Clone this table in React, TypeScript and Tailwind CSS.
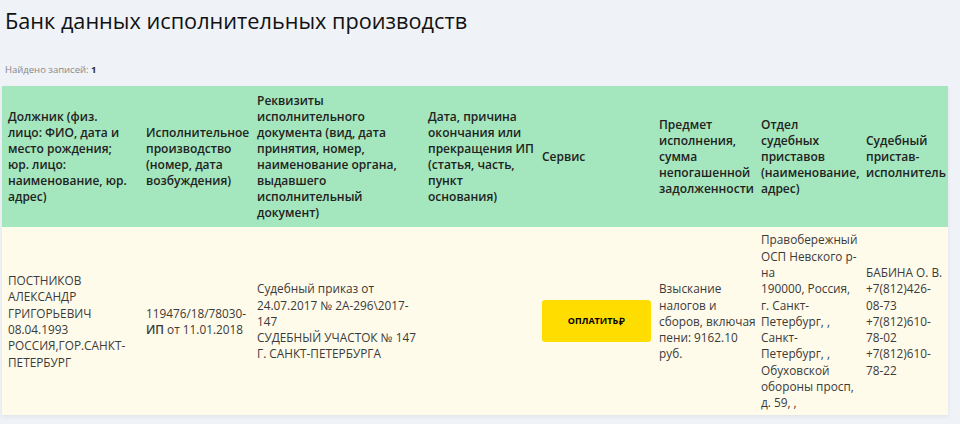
import React from "react";

const heads = [
  "Должник (физ. лицо: ФИО, дата и место рождения; юр. лицо: наименование, юр. адрес)",
  "Исполнительное производство (номер, дата возбуждения)",
  "Реквизиты исполнительного документа (вид, дата принятия, номер, наименование органа, выдавшего исполнительный документ)",
  "Дата, причина окончания или прекращения ИП (статья, часть, пункт основания)",
  "Сервис",
  "Предмет исполнения, сумма непогашенной задолженности",
  "Отдел судебных приставов (наименование, адрес)",
  "Судебный пристав-исполнитель",
];

const widths = ["w-[138px]", "w-[111px]", "w-[171px]", "w-[114px]", "w-[117px]", "w-[102px]", "w-[105px]", "w-[110px]"];

export default function App() {
  return (
    <div className="h-[424px] w-[960px] overflow-hidden bg-[#eff2f7] font-['Open_Sans',sans-serif]">
      <h1 className="pl-[5px] pt-[5px] text-[21.7px] leading-[32px] text-[#111]">
        Банк данных исполнительных производств
      </h1>
      <p className="mt-[26px] pl-[5px] text-[9.5px] leading-[14px] text-[#888]">
        Найдено записей: <b className="text-[#333]">1</b>
      </p>
      <div className="ml-[2px] mt-[9px] w-[946px] overflow-hidden shadow-[0_2px_4px_rgba(0,0,0,0.06)]">
        <table className="w-[968px] table-fixed border-collapse">
          <thead>
            <tr className="h-[141px] bg-[#a4e6bd]">
              {heads.map((h, i) => (
                <th
                  key={i}
                  className={`${widths[i]} pl-[6px] ${i === 0 ? "pr-[10px]" : "pr-[2px]"} text-left align-middle text-[12px] font-semibold leading-[16px] text-[#222]`}
                >
                  {h}
                </th>
              ))}
            </tr>
          </thead>
          <tbody>
            <tr className="h-[188px] bg-[#fffbea] text-[11.8px] leading-[16.3px] text-[#3a3a3a]">
              <td className="pl-[6px] pr-[2px] align-middle">
                ПОСТНИКОВ АЛЕКСАНДР ГРИГОРЬЕВИЧ
                <br />
                08.04.1993
                <br />
                РОССИЯ,ГОР.САНКТ-ПЕТЕРБУРГ
              </td>
              <td className="pl-[6px] pr-[2px] align-middle">
                119476/18/78030-<span className="font-semibold">ИП</span> от 11.01.2018
              </td>
              <td className="pl-[6px] pr-[1px] align-middle">
                Судебный приказ от 24.07.2017 № 2А-296\2017-147
                <br />
                СУДЕБНЫЙ УЧАСТОК № 147 Г. САНКТ-ПЕТЕРБУРГА
              </td>
              <td className="pl-[6px] pr-[2px] align-middle"></td>
              <td className="pl-[6px] pr-[2px] align-middle">
                <button className="flex h-[42px] w-[109px] items-center justify-center rounded-[3px] bg-[#ffdd00] text-[9px] font-bold text-black">
                  ОПЛАТИТЬ<span className="ml-[1px] text-[10px]">₽</span>
                </button>
              </td>
              <td className="pl-[6px] pr-0 align-middle">
                Взыскание налогов и <span className="whitespace-nowrap">сборов, включая</span> пени: 9162.10 руб.
              </td>
              <td className="pl-[6px] pr-0 align-middle">
                Правобережный ОСП Невского р-<wbr />на
                <br />
                190000, Россия, г. Санкт-Петербург, , Санкт-Петербург, , Обуховской обороны просп, д. 59, ,
              </td>
              <td className="pl-[6px] pr-[28px] align-middle">
                <span className="whitespace-nowrap">БАБИНА О. В.</span>
                <br />
                +7(812)426-<wbr />08-73
                <br />
                +7(812)610-<wbr />78-02
                <br />
                +7(812)610-<wbr />78-22
              </td>
            </tr>
          </tbody>
        </table>
      </div>
    </div>
  );
}
